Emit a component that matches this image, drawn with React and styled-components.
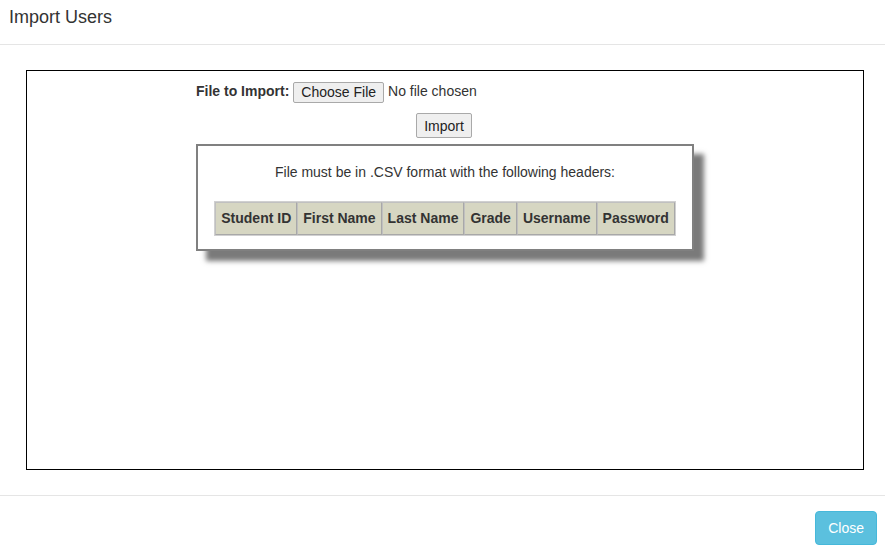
import React from "react";
import styled, { createGlobalStyle } from "styled-components";

const GlobalStyle = createGlobalStyle`
  html, body {
    margin: 0;
    padding: 0;
    background: #fff;
  }
  body {
    font-family: "Liberation Sans", Arial, sans-serif;
    font-size: 14px;
    line-height: 1.42857;
    color: #333;
  }
`;

const Modal = styled.div`
  width: 885px;
  height: 556px;
  display: flex;
  flex-direction: column;
`;

const Header = styled.div`
  height: 45px;
  padding: 5px 9px 0;
  box-sizing: border-box;
  border-bottom: 1px solid #e5e5e5;
`;

const Title = styled.h4`
  margin: 0;
  font-size: 18px;
  font-weight: 400;
  line-height: 24px;
  color: #333;
`;

const Body = styled.div`
  flex: 1;
  padding: 25px 21px 25px 26px;
`;

const Frame = styled.div`
  height: 400px;
  box-sizing: border-box;
  border: 1px solid #000;
  display: flex;
  justify-content: center;
  padding-top: 10px;
`;

const Column = styled.div`
  width: 498px;
  display: flex;
  flex-direction: column;
`;

const FileRow = styled.div`
  display: flex;
  align-items: center;
  height: 22px;
`;

const Label = styled.span`
  font-weight: 700;
  margin-right: 4px;
`;

const NativeButton = styled.button`
  font-family: "Liberation Sans", Arial, sans-serif;
  font-size: 14px;
  color: #222;
  background: #efefef;
  border: 1px solid #a9a9a9;
  border-radius: 2px;
  padding: 0 7px;
  height: ${(p) => p.h || 21}px;
  line-height: 1;
`;

const NoFile = styled.span`
  margin-left: 4px;
`;

const ImportRow = styled.div`
  display: flex;
  justify-content: center;
  margin-top: 10px;
  padding-right: 2px;
`;

const InfoBox = styled.div`
  margin-top: 6px;
  height: 107px;
  box-sizing: border-box;
  border: 2px solid #808080;
  box-shadow: 10px 10px 5px #7a7a7a;
  background: #fff;
  display: flex;
  flex-direction: column;
  align-items: center;
  padding-top: 16px;
`;

const InfoText = styled.p`
  margin: 0 0 19px;
  line-height: 20px;
`;

const HeaderTable = styled.table`
  border-collapse: separate;
  border-spacing: 0;
  border: 1px solid #d0d0d0;
`;

const Th = styled.th`
  background: #d6d6c2;
  border: 1px solid #a8a8a8;
  border-top-color: #c0c0c0;
  border-left-color: #c0c0c0;
  padding: 6px 5px 7px;
  font-weight: 700;
  font-size: 14px;
  line-height: 18px;
  color: #333;
  white-space: nowrap;
`;

const Footer = styled.div`
  height: 61px;
  border-top: 1px solid #e5e5e5;
  display: flex;
  justify-content: flex-end;
  align-items: flex-start;
  padding: 15px 8px 0 0;
  box-sizing: border-box;
`;

const CloseButton = styled.button`
  font-family: "Liberation Sans", Arial, sans-serif;
  font-size: 14px;
  color: #fff;
  background: #5bc0de;
  border: 1px solid #46b8da;
  border-radius: 4px;
  height: 34px;
  padding: 0 12px;
`;

const headers = ["Student ID", "First Name", "Last Name", "Grade", "Username", "Password"];

export default function App() {
  return (
    <Modal>
      <GlobalStyle />
      <Header>
        <Title>Import Users</Title>
      </Header>
      <Body>
        <Frame>
          <Column>
            <FileRow>
              <Label>File to Import:</Label>
              <NativeButton>Choose File</NativeButton>
              <NoFile>No file chosen</NoFile>
            </FileRow>
            <ImportRow>
              <NativeButton h={25}>Import</NativeButton>
            </ImportRow>
            <InfoBox>
              <InfoText>File must be in .CSV format with the following headers:</InfoText>
              <HeaderTable>
                <thead>
                  <tr>
                    {headers.map((h) => (
                      <Th key={h}>{h}</Th>
                    ))}
                  </tr>
                </thead>
              </HeaderTable>
            </InfoBox>
          </Column>
        </Frame>
      </Body>
      <Footer>
        <CloseButton>Close</CloseButton>
      </Footer>
    </Modal>
  );
}
